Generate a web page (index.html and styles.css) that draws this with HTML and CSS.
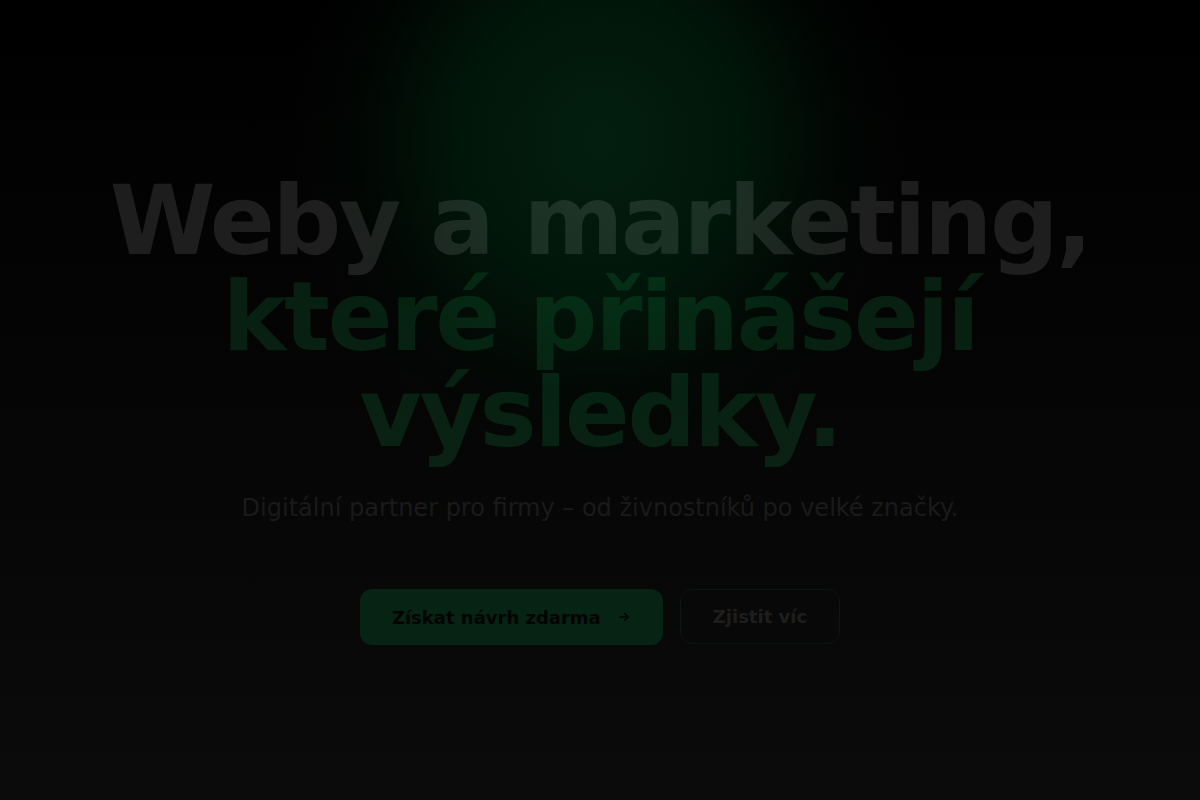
FILE: index.html
```html
<!DOCTYPE html>
<html lang="cs">
<head>
<meta charset="utf-8">
<title>Weby a marketing</title>
<link rel="stylesheet" href="styles.css">
</head>
<body>
<section class="hero">
  <div class="glow"></div>
  <div class="content">
    <h1 class="title">
      <span class="line-white">Weby a marketing,</span>
      <span class="line-green">které přinášejí výsledky.</span>
    </h1>
    <p class="subtitle">Digitální partner pro firmy – od živnostníků po velké značky.</p>
    <div class="actions">
      <a class="btn btn-primary" href="#">Získat návrh zdarma
        <svg class="arrow" width="14" height="14" viewBox="0 0 24 24" fill="none" stroke="currentColor" stroke-width="2.2" stroke-linecap="round" stroke-linejoin="round"><path d="M5 12h14"/><path d="M13 6l6 6-6 6"/></svg>
      </a>
      <a class="btn btn-secondary" href="#">Zjistit víc</a>
    </div>
  </div>
</section>
</body>
</html>
```
FILE: styles.css
```css
html, body {
  margin: 0;
  padding: 0;
}
body {
  font-family: "DejaVu Sans", sans-serif;
  background: #000;
}
.hero {
  position: relative;
  min-height: 800px;
  display: flex;
  justify-content: center;
  align-items: flex-start;
  background: linear-gradient(180deg, #000 0%, #050505 50%, #0b0b0b 100%);
  overflow: hidden;
}
.glow {
  position: absolute;
  left: 290px;
  top: -190px;
  width: 620px;
  height: 660px;
  background: radial-gradient(closest-side, rgba(2, 30, 14, 1) 0%, rgba(1, 25, 11, 0.88) 45%, rgba(0, 10, 4, 0.4) 80%, rgba(0, 0, 0, 0) 100%);
  pointer-events: none;
}
.content {
  position: relative;
  display: flex;
  flex-direction: column;
  align-items: center;
  text-align: center;
  padding-top: 173px;
}
.title {
  margin: 0;
  font-size: 96px;
  line-height: 96px;
  font-weight: 700;
  letter-spacing: -0.025em;
}
.line-white {
  display: block;
  color: rgba(255, 255, 255, 0.11);
}
.line-green {
  display: block;
  color: rgba(22, 180, 90, 0.16);
  padding: 0 200px;
}
.subtitle {
  margin: 31px 0 0;
  font-size: 24px;
  line-height: 32px;
  color: #1a1a1a;
}
.actions {
  display: flex;
  gap: 17px;
  margin-top: 65px;
}
.btn {
  display: flex;
  align-items: center;
  justify-content: center;
  height: 56px;
  box-sizing: border-box;
  border-radius: 12px;
  font-size: 18px;
  font-weight: 700;
  text-decoration: none;
  padding: 0 32px;
}
.btn-primary {
  background: #062314;
  color: #040404;
  gap: 16px;
}
.arrow {
  display: block;
}
.btn-secondary {
  border: 1px solid #0d1610;
  color: #1e1e1e;
  height: 55px;
}
```
